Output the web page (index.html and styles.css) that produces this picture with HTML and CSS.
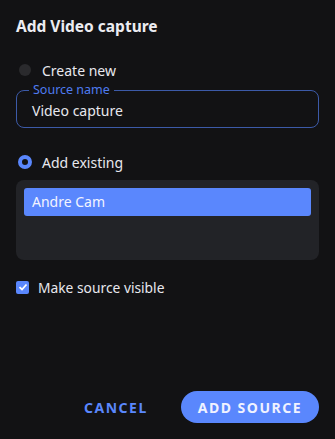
FILE: index.html
```html
<!DOCTYPE html>
<html>
<head>
    <title>Add Video capture</title>
    <link rel="stylesheet" href="styles.css">
</head>
<body>
    <div class="dialog">
        <h2 class="title">Add Video capture</h2>
        <div class="content">
            <label class="radio-row">
                <span class="radio"></span>
                <span>Create new</span>
            </label>
            <div class="field">
                <span class="field-label">Source name</span>
                <div class="field-value">Video capture</div>
            </div>
            <label class="radio-row existing">
                <span class="radio checked"></span>
                <span>Add existing</span>
            </label>
            <div class="list">
                <div class="list-item selected">Andre Cam</div>
            </div>
            <label class="check-row">
                <span class="checkbox">
                    <svg width="10" height="10" viewBox="0 0 10 10"><path d="M1.5 5.2 L4 7.5 L8.5 2.5" fill="none" stroke="#fff" stroke-width="1.8"/></svg>
                </span>
                <span>Make source visible</span>
            </label>
        </div>
        <div class="actions">
            <button type="button" class="btn-text">Cancel</button>
            <button type="button" class="btn-primary">Add Source</button>
        </div>
    </div>
</body>
</html>
```

FILE: styles.css
```css
html, body {
    margin: 0;
    padding: 0;
    background: #121214;
    color: #e8e8ee;
    font-family: "Noto Sans", "DejaVu Sans", sans-serif;
}
.dialog {
    width: 335px;
    height: 439px;
    box-sizing: border-box;
    padding: 14px 16px 16px;
    display: flex;
    flex-direction: column;
}
.title {
    margin: 0;
    font-size: 15.5px;
    font-weight: 700;
    line-height: 24px;
    color: #ececf1;
}
.content {
    flex: 1;
    padding-top: 21px;
}
.radio-row {
    display: flex;
    align-items: center;
    gap: 11px;
    font-size: 14px;
    height: 22px;
    padding-left: 3px;
}
.radio {
    width: 12px;
    height: 12px;
    border-radius: 50%;
    background: #2a2a2d;
    box-sizing: border-box;
}
.radio.checked {
    width: 14px;
    height: 14px;
    margin-left: -1px;
    margin-right: -1px;
    background: #121214;
    border: 4px solid #5a87fd;
}
.field {
    position: relative;
    margin-top: 9px;
    height: 38px;
    box-sizing: border-box;
    border: 1px solid #3c5aa8;
    border-radius: 8px;
    padding: 0 15px;
    display: flex;
    align-items: center;
}
.field-label {
    position: absolute;
    top: -8px;
    left: 12px;
    padding: 0 4px;
    background: #121214;
    font-size: 12.5px;
    line-height: 14px;
    color: #4f7cf0;
}
.field-value {
    font-size: 14px;
    line-height: 18px;
    padding-top: 4px;
}
.existing {
    margin-top: 23px;
}
.list {
    margin-top: 7px;
    background: #222327;
    border-radius: 8px;
    height: 80px;
    padding: 8px;
    box-sizing: border-box;
}
.list-item {
    height: 28px;
    line-height: 28px;
    padding: 0 8px;
    font-size: 14px;
    border-radius: 3px;
}
.list-item.selected {
    background: #5a87fd;
    color: #f2f4ff;
}
.check-row {
    display: flex;
    align-items: center;
    gap: 9px;
    height: 20px;
    margin-top: 17px;
    font-size: 13.8px;
}
.checkbox {
    width: 13px;
    height: 13px;
    border-radius: 2px;
    background: #5a87fd;
    display: flex;
    align-items: center;
    justify-content: center;
}
.actions {
    display: flex;
    justify-content: flex-end;
    align-items: center;
    gap: 33px;
}
.actions button {
    font-family: inherit;
    font-size: 14px;
    font-weight: 700;
    letter-spacing: 1.5px;
    text-transform: uppercase;
    border: none;
    cursor: pointer;
}
.btn-text {
    background: none;
    color: #5a87fd;
    padding: 0;
}
.btn-primary {
    background: #5a87fd;
    color: #f0f2ff;
    height: 32px;
    padding: 0 17px;
    border-radius: 16px;
}
```
